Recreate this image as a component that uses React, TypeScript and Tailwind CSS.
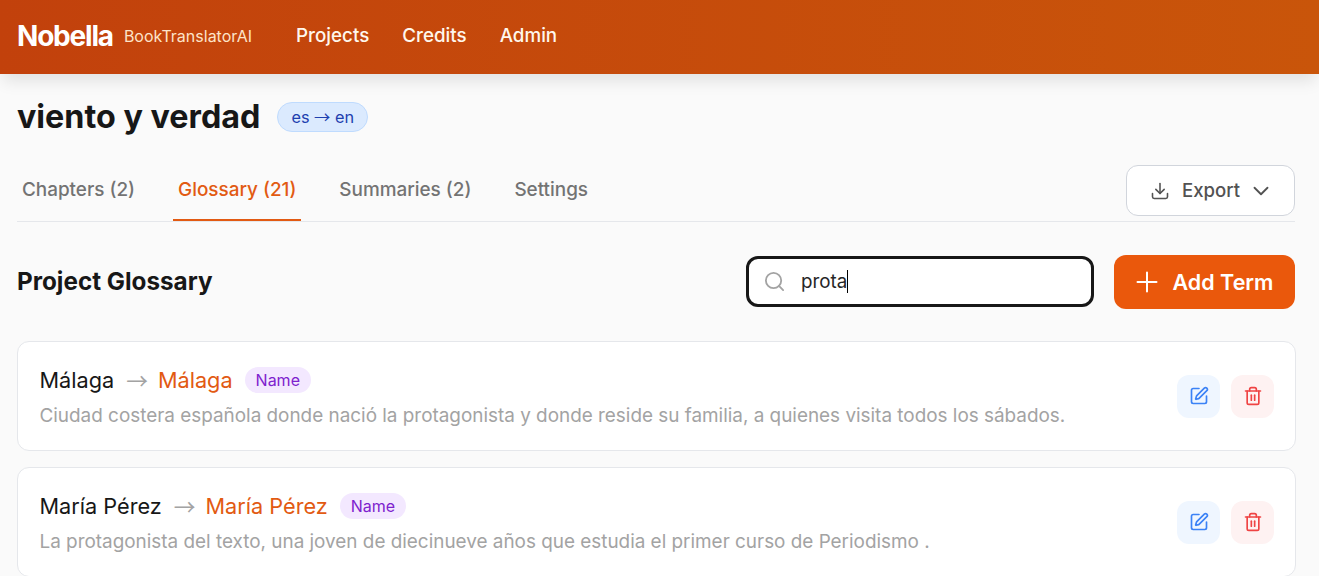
import { Download, ChevronDown, Search, SquarePen, Trash2 } from "lucide-react";

const terms = [
  {
    source: "Málaga",
    target: "Málaga",
    note: "Ciudad costera española donde nació la protagonista y donde reside su familia, a quienes visita todos los sábados.",
  },
  {
    source: "María Pérez",
    target: "María Pérez",
    note: "La protagonista del texto, una joven de diecinueve años que estudia el primer curso de Periodismo .",
  },
];

const TermCard = ({ source, target, note }: { source: string; target: string; note: string }) => (
  <div className="-mr-px flex h-[110px] shrink-0 items-center justify-between rounded-xl border border-gray-200 bg-white pl-[21.5px] pr-[21px]">
    <div className="pt-[2px]">
      <div className="flex items-center text-[21.7px] leading-7">
        <span className="text-[#171717]">{source}</span>
        <span className="ml-3 mr-[10px] font-['Noto_Sans_CJK_SC',sans-serif] text-[#a3a3a3]">→</span>
        <span className="text-[#e25a12]">{target}</span>
        <span className="ml-3 rounded-full bg-[#f3e8ff] px-[11px] py-[2px] text-[16px] leading-[22px] text-[#7e22ce]">Name</span>
      </div>
      <p className="mt-[9px] text-[18.9px] leading-[26px] text-[#a3a3a3]">{note}</p>
    </div>
    <div className="flex gap-[11px]">
      <button className="flex h-[43px] w-[43px] items-center justify-center rounded-xl bg-[#eff6ff] text-[#3b82f6]">
        <SquarePen size={20} strokeWidth={2} />
      </button>
      <button className="flex h-[43px] w-[43px] items-center justify-center rounded-xl bg-[#fef2f2] text-[#ef4444]">
        <Trash2 size={20} strokeWidth={2} />
      </button>
    </div>
  </div>
);

export default function App() {
  return (
    <div className="flex h-[576px] flex-col overflow-hidden bg-[#fafafa] font-['Inter',sans-serif]">
      <header className="flex h-[74px] shrink-0 items-center bg-gradient-to-r from-[#c2410c] to-[#c9550a] pb-[2px] pl-[17px] shadow-[0_10px_15px_-3px_rgba(0,0,0,0.1)]">
        <span className="text-[28px] font-bold tracking-[-1.2px] text-white">Nobella</span>
        <span className="ml-[11px] text-[16px] text-[#fde3c8]">BookTranslatorAI</span>
        <nav className="ml-[44px] flex gap-[33px] text-[18.8px] font-medium text-[#fff7ed]">
          <span>Projects</span>
          <span>Credits</span>
          <span>Admin</span>
        </nav>
      </header>

      <main className="flex flex-1 flex-col pl-[17px] pr-[24px]">
        <div className="flex h-[86px] shrink-0 items-center">
          <h1 className="pt-[1px] text-[32.3px] font-bold text-[#171717]">viento y verdad</h1>
          <span className="ml-[17px] rounded-full border border-[#bfdbfe] bg-[#dbeafe] px-[13px] py-[2px] text-[16.3px] leading-[23px] text-[#1e40af]">
            es <span className="font-['Noto_Sans_CJK_SC',sans-serif]">→</span> en
          </span>
        </div>

        <div className="flex h-[62px] shrink-0 items-center justify-between border-b border-gray-200">
          <div className="flex h-full items-end text-[18.9px] font-medium text-[#737373]">
            <span className="flex h-full items-center border-b-2 border-transparent px-[5px] pt-[2px]">Chapters (2)</span>
            <span className="ml-[33px] flex h-full items-center border-b-2 border-[#e25a12] px-[5px] pt-[2px] text-[#e25a12]">Glossary (21)</span>
            <span className="ml-[33px] flex h-full items-center border-b-2 border-transparent px-[5px] pt-[2px]">Summaries (2)</span>
            <span className="ml-[33px] flex h-full items-center border-b-2 border-transparent px-[5px] pt-[2px]">Settings</span>
          </div>
          <button className="flex h-[51px] w-[169px] items-center rounded-xl border border-gray-300 bg-white pl-[23px] text-[18.6px] font-medium text-[#525252]">
            <Download size={20} className="mr-[12px]" strokeWidth={1.9} />
            Export
            <ChevronDown size={26} className="ml-[8px]" strokeWidth={1.7} />
          </button>
        </div>

        <div className="flex h-[119px] shrink-0 items-center justify-between">
          <h2 className="pt-[2px] text-[24.25px] font-bold text-[#171717]">Project Glossary</h2>
          <div className="flex items-center gap-5">
            <div className="flex h-[51px] w-[348px] items-center rounded-xl border-[3px] border-[#171717] bg-white pl-[14px]">
              <Search size={23} strokeWidth={1.9} className="text-[#a3a3a3]" />
              <span className="ml-[15px] pt-[2px] text-[18.8px] text-[#262626]">prota</span>
              <span className="h-[23px] w-px bg-black" />
            </div>
            <button className="flex h-[54px] w-[181px] items-center justify-center gap-[15px] rounded-xl bg-[#ea580c] text-[21.5px] font-semibold text-white">
              <svg width="22" height="22" viewBox="0 0 22 22" fill="none" stroke="currentColor" strokeWidth="2" strokeLinecap="round">
                <path d="M11 1.5v19M1.5 11h19" />
              </svg>
              <span className="pt-[2px]">Add Term</span>
            </button>
          </div>
        </div>

        <div className="flex flex-col gap-4">
          {terms.map((term) => (
            <TermCard key={term.source} {...term} />
          ))}
        </div>
      </main>
    </div>
  );
}
